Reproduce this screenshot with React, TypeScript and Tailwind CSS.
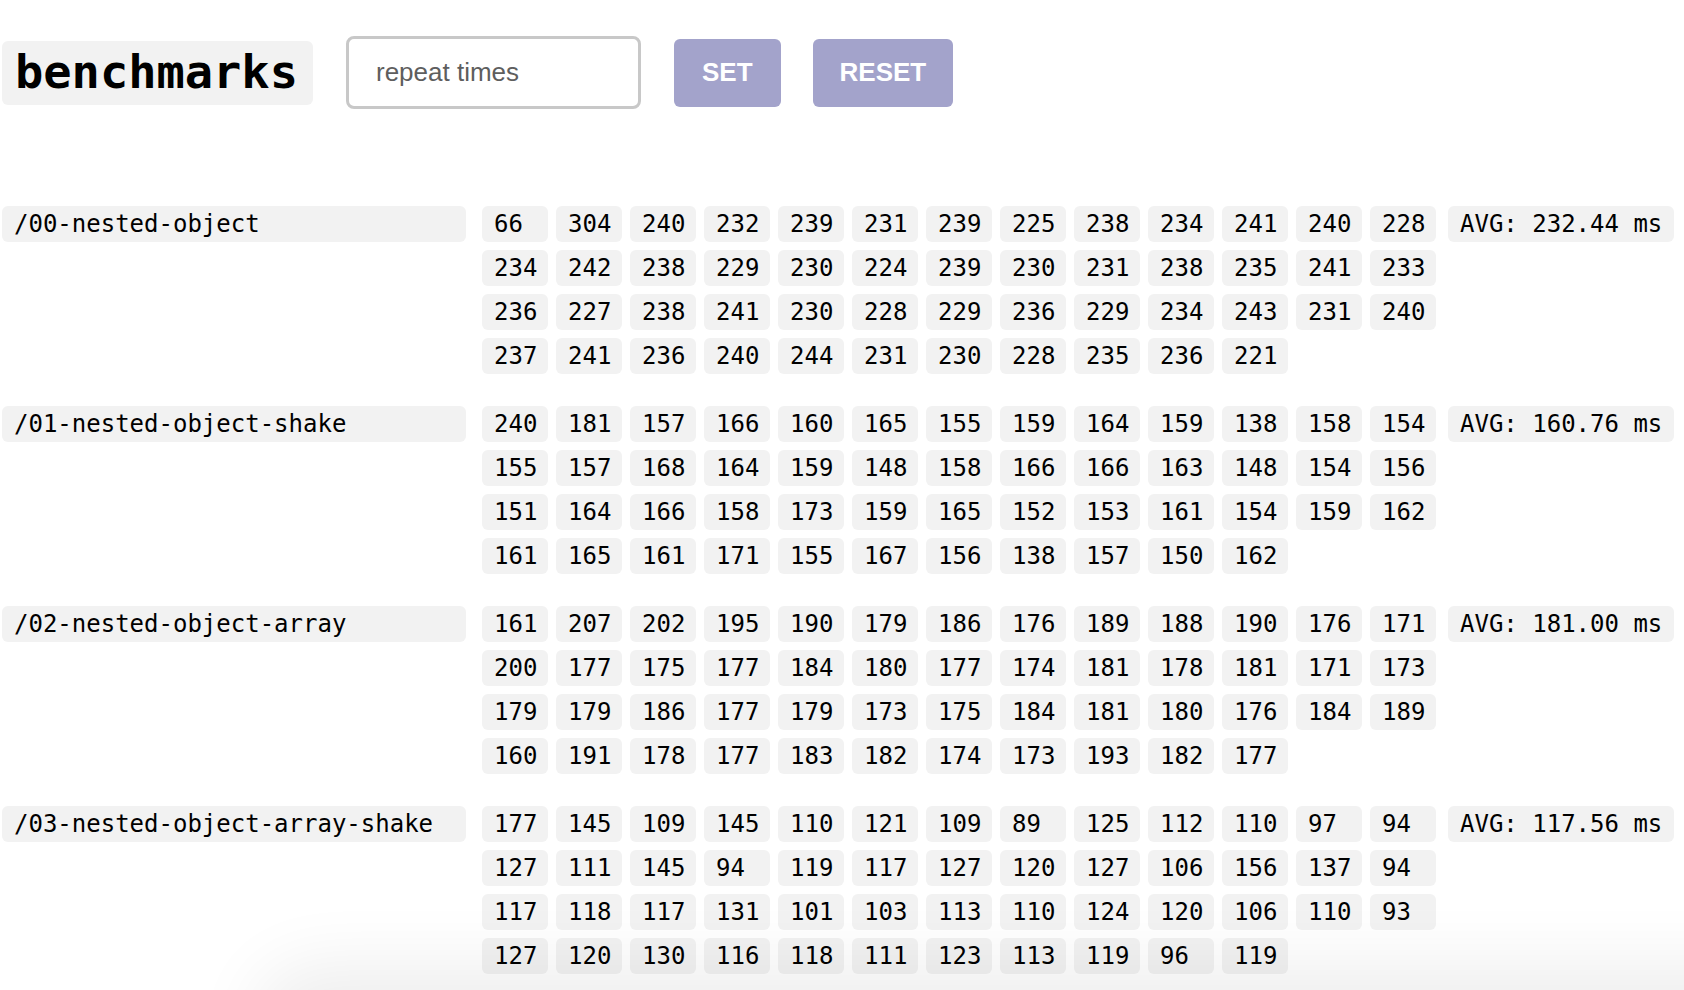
import React, { useState } from 'react';

interface Bench {
  name: string;
  avg: string;
  times: number[];
}

const benches: Bench[] = [
  {
    name: '/00-nested-object',
    avg: '232.44',
    times: [
      66, 304, 240, 232, 239, 231, 239, 225, 238, 234, 241, 240, 228,
      234, 242, 238, 229, 230, 224, 239, 230, 231, 238, 235, 241, 233,
      236, 227, 238, 241, 230, 228, 229, 236, 229, 234, 243, 231, 240,
      237, 241, 236, 240, 244, 231, 230, 228, 235, 236, 221,
    ],
  },
  {
    name: '/01-nested-object-shake',
    avg: '160.76',
    times: [
      240, 181, 157, 166, 160, 165, 155, 159, 164, 159, 138, 158, 154,
      155, 157, 168, 164, 159, 148, 158, 166, 166, 163, 148, 154, 156,
      151, 164, 166, 158, 173, 159, 165, 152, 153, 161, 154, 159, 162,
      161, 165, 161, 171, 155, 167, 156, 138, 157, 150, 162,
    ],
  },
  {
    name: '/02-nested-object-array',
    avg: '181.00',
    times: [
      161, 207, 202, 195, 190, 179, 186, 176, 189, 188, 190, 176, 171,
      200, 177, 175, 177, 184, 180, 177, 174, 181, 178, 181, 171, 173,
      179, 179, 186, 177, 179, 173, 175, 184, 181, 180, 176, 184, 189,
      160, 191, 178, 177, 183, 182, 174, 173, 193, 182, 177,
    ],
  },
  {
    name: '/03-nested-object-array-shake',
    avg: '117.56',
    times: [
      177, 145, 109, 145, 110, 121, 109, 89, 125, 112, 110, 97, 94,
      127, 111, 145, 94, 119, 117, 127, 120, 127, 106, 156, 137, 94,
      117, 118, 117, 131, 101, 103, 113, 110, 124, 120, 106, 110, 93,
      127, 120, 130, 116, 118, 111, 123, 113, 119, 96, 119,
    ],
  },
];

const mono = 'font-["DejaVu_Sans_Mono","Liberation_Mono",monospace]';

const BenchRow: React.FC<{ bench: Bench }> = ({ bench }) => (
  <div className="flex items-start">
    <div className="w-[464px] h-9 pl-3 flex items-center bg-[#f2f2f2] rounded-md text-[24px] text-black">
      {bench.name}
    </div>
    <div className="ml-4 w-[954px] grid grid-cols-[repeat(13,66px)] gap-2">
      {bench.times.map((t, i) => (
        <div
          key={i}
          className="h-9 px-3 flex items-center bg-[#f2f2f2] rounded-md text-[24px] text-black"
        >
          {t}
        </div>
      ))}
    </div>
    <div className="ml-3 h-9 px-3 flex items-center bg-[#f2f2f2] rounded-md text-[24px] text-black whitespace-pre">
      AVG: {bench.avg} ms
    </div>
  </div>
);

export default function App() {
  const [repeat, setRepeat] = useState('');

  return (
    <div className={`relative min-h-[990px] bg-white pl-[2px] overflow-hidden ${mono}`}>
      {/* Header */}
      <div className="pt-9 flex items-center">
        <h1 className="h-16 pl-[13px] pr-[15px] flex items-center bg-[#f2f2f2] rounded-md text-[47px] font-bold text-black">
          benchmarks
        </h1>
        <input
          type="text"
          value={repeat}
          onChange={(e) => setRepeat(e.target.value)}
          placeholder="repeat times"
          className="ml-[33px] w-[295px] h-[73px] px-[27px] border-[3px] border-[#c8c8c8] rounded-lg text-[26px] font-['Liberation_Sans',Arial,sans-serif] text-[#333] placeholder:text-[#5e5e5e] outline-none"
        />
        <button className="ml-[33px] h-[68px] px-[28px] bg-[#a3a3cb] rounded-md text-white text-[26px] font-bold font-['Liberation_Sans',Arial,sans-serif]">
          SET
        </button>
        <button className="ml-[32px] h-[68px] px-[27px] bg-[#a3a3cb] rounded-md text-white text-[26px] font-bold font-['Liberation_Sans',Arial,sans-serif]">
          RESET
        </button>
      </div>

      {/* Results */}
      <div className="mt-[97px] flex flex-col gap-8">
        {benches.map((b) => (
          <BenchRow key={b.name} bench={b} />
        ))}
      </div>

      {/* soft shadow from something below the fold */}
      <div className="pointer-events-none fixed left-[280px] right-[-200px] bottom-[-70px] h-[70px] rounded-full shadow-[0_0_70px_25px_rgba(0,0,0,0.07)]" />
    </div>
  );
}
